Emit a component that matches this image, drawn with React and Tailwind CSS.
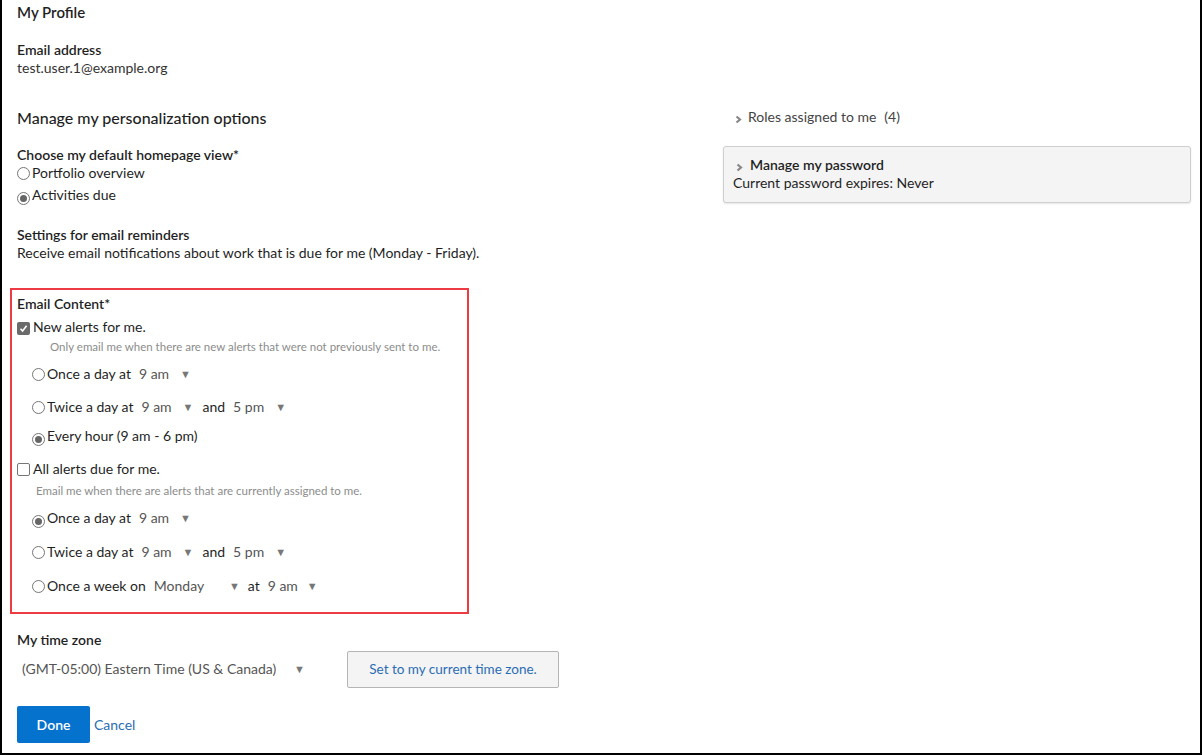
import { useState } from "react";

function Radio({ checked }) {
  return (
    <span className="inline-flex h-[13px] w-[13px] shrink-0 items-center justify-center rounded-full border border-[#767676] bg-white">
      {checked && <span className="h-[7px] w-[7px] rounded-full bg-[#666]" />}
    </span>
  );
}

function Checkbox({ checked }) {
  return checked ? (
    <span className="inline-flex h-[13px] w-[13px] shrink-0 items-center justify-center rounded-[2px] bg-[#6b6b6b]">
      <svg width="9" height="9" viewBox="0 0 9 9">
        <polyline points="1.5,4.8 3.6,7 7.6,1.8" fill="none" stroke="#fff" strokeWidth="1.6" />
      </svg>
    </span>
  ) : (
    <span className="inline-block h-[13px] w-[13px] shrink-0 rounded-[2px] border border-[#767676] bg-white" />
  );
}

function Select({ value, className }) {
  return (
    <span className={`inline-flex items-center justify-between text-[#555] ${className}`}>
      <span>{value}</span>
      <span className="mr-[2px] text-[11px] text-[#777]">▼</span>
    </span>
  );
}

function Chevron() {
  return (
    <svg width="7" height="9" viewBox="0 0 7 9" className="mt-[4px] shrink-0">
      <polyline points="1.5,1.5 5,4.5 1.5,7.5" fill="none" stroke="#888" strokeWidth="2.2" />
    </svg>
  );
}

function OptionRow({ checked, children, className }) {
  return (
    <div className={`flex h-[18px] items-center pl-[15px] ${className}`}>
      <span className="mt-[4px]">
        <Radio checked={checked} />
      </span>
      <span className="ml-[2px] flex items-center">{children}</span>
    </div>
  );
}

export default function App() {
  const [tz] = useState("(GMT-05:00) Eastern Time (US & Canada)");

  return (
    <div
      className="h-[755px] w-[1202px] overflow-hidden border-b-2 border-l-2 border-r-2 border-black bg-white text-[14px] leading-[18px] text-[#1f1f1f]"
      style={{ fontFamily: "Lato, 'Noto Sans', sans-serif" }}
    >
      <div className="flex">
        <div className="w-[721px] shrink-0 pl-[8px]">
          <div className="pl-[7px]">
            <div className="pt-[2px] text-[15px] font-semibold leading-[20px]">My Profile</div>
            <div className="mt-[19px] font-semibold">Email address</div>
            <div className="text-[#333]">test.user.1@example.org</div>
            <div className="mt-[30px] text-[16px] font-medium leading-[22px]">Manage my personalization options</div>
            <div className="mt-[17px] font-semibold">Choose my default homepage view*</div>
            <div className="flex h-[18px] items-center gap-[2px]">
              <span className="mt-[4px]"><Radio /></span>
              <span>Portfolio overview</span>
            </div>
            <div className="mt-[4px] flex h-[18px] items-center gap-[2px]">
              <span className="mt-[4px]"><Radio checked /></span>
              <span>Activities due</span>
            </div>
            <div className="mt-[22px] font-semibold">Settings for email reminders</div>
            <div>Receive email notifications about work that is due for me (Monday - Friday).</div>
          </div>

          <div className="mt-[26px] w-[459px] border-2 border-[#ee3a43] px-[5px] pb-[17px] pt-[5px]">
            <div className="font-semibold">Email Content*</div>
            <div className="mt-[5px] flex h-[18px] items-center gap-[3px]">
              <span className="mt-[2px]"><Checkbox checked /></span>
              <span>New alerts for me.</span>
            </div>
            <div className="mt-[3px] pl-[33px] text-[11.5px] leading-[16px] text-[#8c8c8c]">
              Only email me when there are new alerts that were not previously sent to me.
            </div>
            <OptionRow className="mt-[10px]">
              Once a day at
              <Select value="9 am" className="ml-[8px] w-[54px]" />
            </OptionRow>
            <OptionRow className="mt-[15px]">
              Twice a day at
              <Select value="9 am" className="ml-[8px] w-[54px]" />
              <span className="ml-[7px]">and</span>
              <Select value="5 pm" className="ml-[8px] w-[55px]" />
            </OptionRow>
            <OptionRow checked className="mt-[11px]">
              Every hour (9 am - 6 pm)
            </OptionRow>

            <div className="mt-[15px] flex h-[18px] items-center gap-[3px]">
              <span className="mt-[4px]"><Checkbox /></span>
              <span>All alerts due for me.</span>
            </div>
            <div className="mt-[5px] pl-[19px] text-[11.5px] leading-[16px] text-[#8c8c8c]">
              Email me when there are alerts that are currently assigned to me.
            </div>
            <OptionRow checked className="mt-[10px]">
              Once a day at
              <Select value="9 am" className="ml-[8px] w-[54px]" />
            </OptionRow>
            <OptionRow className="mt-[16px]">
              Twice a day at
              <Select value="9 am" className="ml-[8px] w-[54px]" />
              <span className="ml-[7px]">and</span>
              <Select value="5 pm" className="ml-[8px] w-[55px]" />
            </OptionRow>
            <OptionRow className="mt-[16px]">
              Once a week on
              <Select value="Monday" className="ml-[8px] w-[88px]" />
              <span className="ml-[6px]">at</span>
              <Select value="9 am" className="ml-[8px] w-[52px]" />
            </OptionRow>
          </div>

          <div className="pl-[7px]">
            <div className="mt-[17px] font-semibold">My time zone</div>
            <div className="mt-[2px] flex h-[36px] items-center">
              <Select value={tz} className="w-[290px] pl-[5px]" />
              <button className="ml-[40px] h-[37px] w-[212px] rounded-[2px] border border-[#b5b5b5] bg-[#f4f4f4] text-[13.5px] text-[#2a6db5]">
                Set to my current time zone.
              </button>
            </div>
            <div className="mt-[19px] flex items-center">
              <button className="h-[37px] w-[73px] rounded-[2px] bg-[#0572ce] font-semibold text-white">Done</button>
              <span className="ml-[4px] text-[#2a6db5]">Cancel</span>
            </div>
          </div>
        </div>

        <div className="flex-1 pr-[9px] pt-[108px]">
          <div className="flex items-center gap-[6px] pl-[12px] text-[#444]">
            <Chevron />
            <span>Roles assigned to me</span>
            <span className="ml-[2px]">(4)</span>
          </div>
          <div className="mt-[20px] rounded-[3px] border border-[#cfcfcf] bg-[#f4f4f4] px-[9px] pb-[10px] pt-[9px] shadow-[0_1px_2px_rgba(0,0,0,0.1)]">
            <div className="flex items-center gap-[7px] pl-[3px]">
              <Chevron />
              <span className="font-semibold">Manage my password</span>
            </div>
            <div>Current password expires: Never</div>
          </div>
        </div>
      </div>
    </div>
  );
}
